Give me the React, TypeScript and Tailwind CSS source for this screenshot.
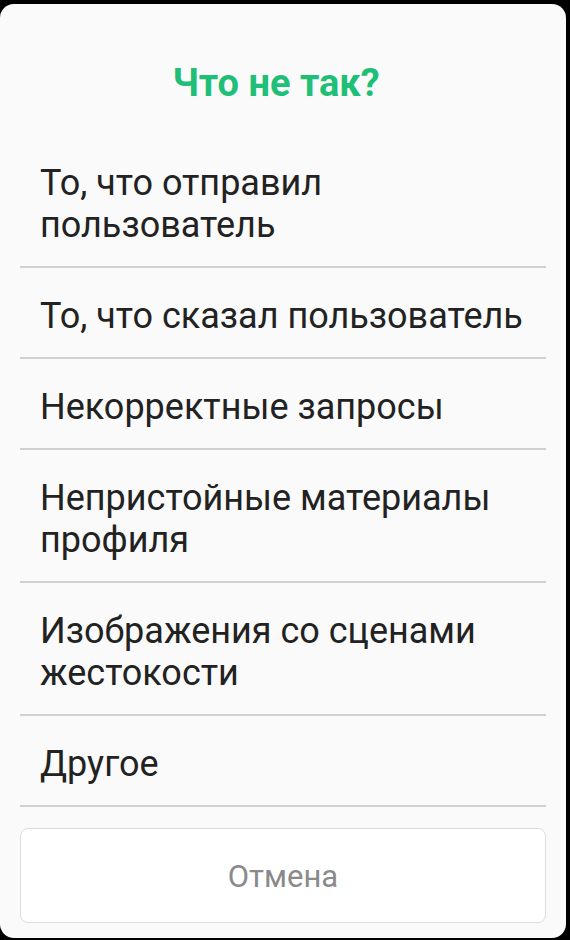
import React from "react";

const items: string[][] = [
  ["То, что отправил", "пользователь"],
  ["То, что сказал пользователь"],
  ["Некорректные запросы"],
  ["Непристойные материалы", "профиля"],
  ["Изображения со сценами", "жестокости"],
  ["Другое"],
];

export default function App() {
  return (
    <div className="w-[570px] h-[940px] bg-black overflow-hidden pt-[4px] pr-[4px]" style={{ fontFamily: "Roboto, 'Noto Sans', sans-serif" }}>
      <div className="h-[934px] bg-[#fafafa] rounded-[14px] flex flex-col px-[20px]">
        <div className="h-[131px] pt-[60px] pr-[14px] flex justify-center">
          <div className="text-[38px] font-bold text-[#1fbf78] leading-none">Что не так?</div>
        </div>
        {items.map((lines, i) => (
          <div key={i} className="border-b-2 border-[#d0d0d0] pt-[27px] pb-[20px] px-[20px] text-[36px] leading-[42px] text-[#222222]">
            {lines.map((l, j) => (
              <div key={j}>{l}</div>
            ))}
          </div>
        ))}
        <div className="mt-[21px] h-[95px] rounded-[8px] border border-[#dedede] bg-white flex items-center justify-center pt-[4px] text-[31px] text-[#8a8a8a]">
          Отмена
        </div>
      </div>
    </div>
  );
}
